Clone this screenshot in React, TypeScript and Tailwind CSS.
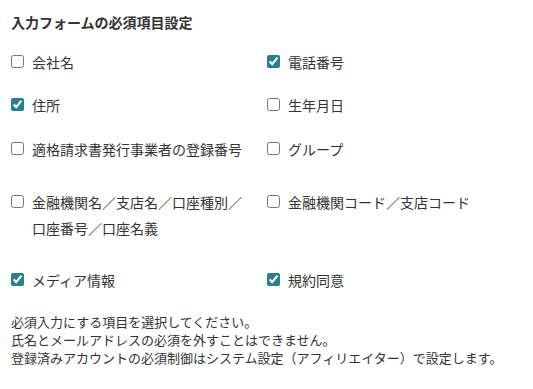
import { useState } from "react";

type Item = { label: string; checked: boolean };

const rows: { items: Item[]; mt: string }[] = [
  { items: [{ label: "会社名", checked: false }, { label: "電話番号", checked: true }], mt: "mt-[17px]" },
  { items: [{ label: "住所", checked: true }, { label: "生年月日", checked: false }], mt: "mt-[17px]" },
  { items: [{ label: "適格請求書発行事業者の登録番号", checked: false }, { label: "グループ", checked: false }], mt: "mt-[18px]" },
  {
    items: [
      { label: "金融機関名／支店名／口座種別／口座番号／口座名義", checked: false },
      { label: "金融機関コード／支店コード", checked: false },
    ],
    mt: "mt-[27px]",
  },
  { items: [{ label: "メディア情報", checked: true }, { label: "規約同意", checked: true }], mt: "mt-[26px]" },
];

function Check({ item }: { item: Item }) {
  const [on, setOn] = useState(item.checked);
  return (
    <label className="flex items-start gap-2 pr-4">
      <input
        type="checkbox"
        checked={on}
        onChange={() => setOn(!on)}
        className="m-0 mt-[6px] h-[13px] w-[13px] shrink-0 accent-[#28808f]"
      />
      <span className="max-w-[225px] text-[14px] leading-[26px] text-[#333]">{item.label}</span>
    </label>
  );
}

export default function App() {
  return (
    <div
      className="min-h-[389px] w-[533px] bg-white px-[11px] pt-[12px] text-[#333]"
      style={{ fontFamily: '"Noto Sans CJK JP", "Noto Sans", sans-serif' }}
    >
      <h2 className="text-[14px] font-bold leading-[20px]">入力フォームの必須項目設定</h2>
      {rows.map((r, i) => (
        <div key={i} className={`grid grid-cols-[256px_1fr] ${r.mt}`}>
          {r.items.map((it) => (
            <Check key={it.label} item={it} />
          ))}
        </div>
      ))}
      <div className="mt-[20px] text-[13px] leading-[18px]">
        <p>必須入力にする項目を選択してください。</p>
        <p>氏名とメールアドレスの必須を外すことはできません。</p>
        <p>登録済みアカウントの必須制御はシステム設定（アフィリエイター）で設定します。</p>
      </div>
    </div>
  );
}
